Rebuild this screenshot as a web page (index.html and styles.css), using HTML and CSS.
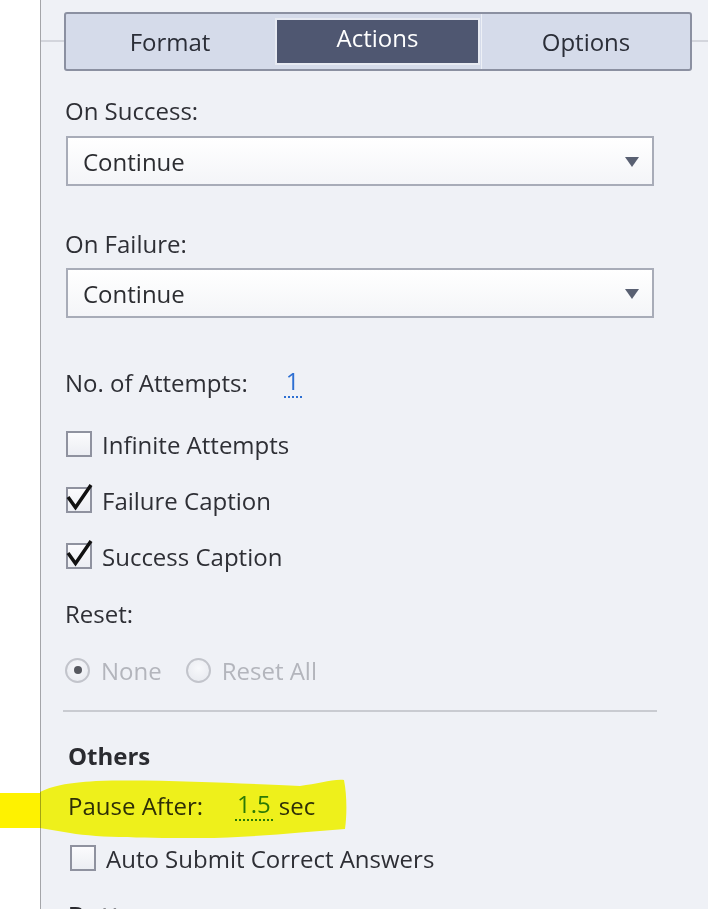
FILE: index.html
```html
<!DOCTYPE html>
<html lang="en">
<head>
<meta charset="utf-8">
<title>Actions</title>
<link rel="stylesheet" href="styles.css">
</head>
<body>
<div class="page">
  <div class="gutter"></div>
  <div class="panel">
    <div class="tabrow">
      <div class="tabs">
        <div class="tab tab-format">Format</div>
        <div class="tab tab-actions active">Actions</div>
        <div class="tab tab-options">Options</div>
      </div>
    </div>

    <div class="label l-success">On Success:</div>
    <div class="select s1">
      <span>Continue</span>
      <svg class="arrow" width="14" height="10" viewBox="0 0 14 10"><path d="M0 0H14L7 10Z" fill="#596072"/></svg>
    </div>

    <div class="label l-failure">On Failure:</div>
    <div class="select s2">
      <span>Continue</span>
      <svg class="arrow" width="14" height="10" viewBox="0 0 14 10"><path d="M0 0H14L7 10Z" fill="#596072"/></svg>
    </div>

    <div class="row attempts">
      <span>No. of Attempts:</span>
      <span class="value blue">1</span>
    </div>

    <div class="checklist">
      <div class="check"><span class="box"></span><span>Infinite Attempts</span></div>
      <div class="check"><span class="box checked"><svg class="tick" width="26" height="26" viewBox="0 0 26 26"><path d="M2 10 L9.5 20.5 L25 -2" fill="none" stroke="#111" stroke-width="3.5"/></svg></span><span>Failure Caption</span></div>
      <div class="check"><span class="box checked"><svg class="tick" width="26" height="26" viewBox="0 0 26 26"><path d="M2 10 L9.5 20.5 L25 -2" fill="none" stroke="#111" stroke-width="3.5"/></svg></span><span>Success Caption</span></div>
    </div>

    <div class="label l-reset">Reset:</div>
    <div class="radios">
      <div class="radio"><span class="circle on"></span><span>None</span></div>
      <div class="radio"><span class="circle"></span><span>Reset All</span></div>
    </div>

    <div class="divider"></div>

    <div class="others">
      <div class="heading h-others">Others</div>
      <div class="row pause">
        <span>Pause After:</span>
        <span class="value green">1.5</span>
        <span class="unit">sec</span>
      </div>
      <div class="check auto"><span class="box"></span><span>Auto Submit Correct Answers</span></div>
      <div class="heading h-buttons">Buttons</div>
    </div>
  </div>

  <svg class="highlight" width="708" height="909" viewBox="0 0 708 909">
    <path d="M0 793 H41 V828 H0 Z" fill="#fef200"/>
    <path d="M40 792 C52 786 66 783 96 781 C160 779 250 784 300 786 C318 784 332 779 344 780 C347 795 347 815 345 829 C300 832 250 838 200 838 C150 838 100 838 70 833 L40 828 Z" fill="#fefe1c"/>
  </svg>
</div>
</body>
</html>
```

FILE: styles.css
```css
html, body {
  margin: 0;
  padding: 0;
}

body {
  font-family: "Open Sans", "Noto Sans", "DejaVu Sans", sans-serif;
  font-size: 24px;
  color: #2e2f35;
  background: #ffffff;
}

.page {
  position: relative;
  display: flex;
  width: 708px;
  height: 909px;
  overflow: hidden;
}

.gutter {
  width: 40px;
  flex: none;
  background: #ffffff;
}

.panel {
  flex: 1;
  display: flex;
  flex-direction: column;
  align-items: flex-start;
  border-left: 1px solid #a4a5a9;
  background: #eff1f6;
  padding-left: 24px;
}

.panel > *,
.others > *,
.checklist > * {
  flex-shrink: 0;
}

/* tabs */
.tabrow {
  align-self: stretch;
  margin-left: -24px;
  height: 71px;
  box-sizing: border-box;
  padding: 12px 16px 0 23px;
  background: linear-gradient(#d3d5dc, #d3d5dc) no-repeat 0 40px / 100% 2px;
}

.tabs {
  display: flex;
  height: 59px;
  box-sizing: border-box;
  border: 2px solid #8b90a1;
  border-radius: 3px;
  background: #d5dbea;
}

.tab {
  display: flex;
  align-items: center;
  justify-content: center;
  color: #2b2e38;
  box-sizing: border-box;
}

.tab-format {
  width: 208px;
}

.tab-options {
  flex: 1;
  border-left: 1px solid #edf0f6;
}

.tab.active {
  background: #4f5771;
  color: #ffffff;
  margin: 4px 1px 4px 1px;
  border: 2px solid #e7eaf2;
  padding-bottom: 9px;
  width: 205px;
}

/* labels and rows */
.label,
.row,
.heading {
  height: 30px;
  line-height: 30px;
  white-space: nowrap;
}

.l-success { margin-top: 25px; }
.l-failure { margin-top: 43px; }
.l-reset { margin-top: 15px; }

.select {
  display: flex;
  align-items: center;
  justify-content: space-between;
  width: 588px;
  height: 50px;
  box-sizing: border-box;
  margin-left: 1px;
  padding: 0 13px 0 15px;
  border: 2px solid #a8acb8;
  background: linear-gradient(#ffffff, #f4f5f8);
  color: #2c2d31;
}

.s1 { margin-top: 10px; }
.s2 { margin-top: 9px; }

.arrow {
  margin-top: 2px;
}

.row {
  display: flex;
  align-items: center;
}

.attempts { margin-top: 50px; }

.value {
  display: inline-block;
  line-height: 26px;
  height: 28px;
  padding: 0 2px;
  border-bottom: 2px dotted currentColor;
}

.attempts .value { margin-left: 36px; }
.pause .value { margin-left: 32px; }

.blue { color: #2d6fd2; }
.green { color: #2b7a1c; }

.unit {
  margin-left: 6px;
}

/* checkboxes */
.checklist {
  margin-top: 18px;
  display: flex;
  flex-direction: column;
}

.check {
  display: flex;
  align-items: center;
  gap: 10px;
  height: 56px;
  white-space: nowrap;
}

.box {
  position: relative;
  width: 26px;
  height: 26px;
  box-sizing: border-box;
  margin-left: 1px;
  border: 2px solid #8f929f;
  background: linear-gradient(#fbfbfd, #eceef3);
  flex: none;
}

.tick {
  position: absolute;
  left: -2px;
  top: -2px;
  overflow: visible;
}

/* radios */
.radios {
  margin-top: 26px;
  display: flex;
  align-items: center;
  gap: 24px;
  height: 30px;
  color: #b3b5bc;
}

.radio {
  display: flex;
  align-items: center;
  gap: 11px;
}

.circle {
  position: relative;
  width: 25px;
  height: 25px;
  box-sizing: border-box;
  border-radius: 50%;
  border: 2px solid #c2c4cb;
  background: radial-gradient(circle at 50% 40%, #f7f8fb, #e6e8ee);
  flex: none;
}

.circle.on::after {
  content: "";
  position: absolute;
  left: 50%;
  top: 50%;
  width: 8px;
  height: 8px;
  margin: -4px 0 0 -4px;
  border-radius: 50%;
  background: #56585f;
}

.divider {
  margin-top: 25px;
  margin-left: -2px;
  width: 594px;
  height: 2px;
  background: #c9cbd1;
}

/* others */
.others {
  display: flex;
  flex-direction: column;
  padding-left: 3px;
}

.heading {
  font-weight: 700;
  color: #2a2b30;
}

.h-others { margin-top: 29px; }
.pause { margin-top: 20px; }

.check.auto {
  margin-top: 22px;
  height: 30px;
}

.check.auto .box {
  margin-left: 2px;
}

.h-buttons { margin-top: 27px; }

.highlight {
  position: absolute;
  left: 0;
  top: 0;
  mix-blend-mode: multiply;
  pointer-events: none;
}
```
